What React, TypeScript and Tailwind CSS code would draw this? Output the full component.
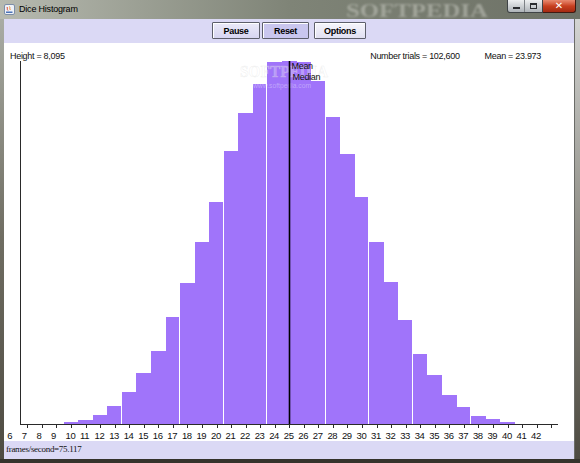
import React from 'react';

const X = (v: number) => 71 + (v - 10) * 14.55;

// top edge (screen y) of each bar, values 10..40
const tops: Record<number, number> = {
  10: 422, 11: 420, 12: 415, 13: 406, 14: 392, 15: 373, 16: 351, 17: 317, 18: 283,
  19: 242, 20: 202, 21: 151, 22: 113, 23: 84, 24: 62, 25: 60, 26: 62, 27: 81,
  28: 117, 29: 154, 30: 197, 31: 242, 32: 282, 33: 320, 34: 354, 35: 375,
  36: 395, 37: 407, 38: 416, 39: 419, 40: 422,
};
const gapAfter = new Set([13, 17, 20, 23, 27, 30, 33, 37]);
const BASE = 424;

const TitleBar = () => (
  <div className="h-[19px] flex items-start bg-gradient-to-r from-[#b7bab0] via-[#7f8477] to-[#6d7166]">
    <svg width="11" height="11" viewBox="0 0 11 11" className="ml-[4px] mt-[4px]">
      <rect x="0.5" y="0.5" width="10" height="10" rx="1.5" fill="#eef2f8" stroke="#7d8ea8" />
      <path d="M3 3 C4 4.5 2.5 5 4 6.5" stroke="#e0422a" strokeWidth="1" fill="none" />
      <path d="M5.5 2.5 C6.5 4 5 4.8 6.5 6" stroke="#f08a2a" strokeWidth="1" fill="none" />
      <path d="M2 7.5 H8.5 V9 H2 Z" fill="#4a72b8" />
    </svg>
    <span className="ml-[4px] mt-[4px] text-[9px] leading-[10px] tracking-[-0.2px] text-black">Dice Histogram</span>
    <div className="flex-1 flex justify-end pr-[16px] pt-[1px] blur-[1px]">
      <svg width="146" height="18" viewBox="0 0 146 18">
        <text x="1" y="16" fontFamily="Liberation Serif" fontWeight="bold" fontSize="19" textLength="142" lengthAdjust="spacingAndGlyphs" fill="#c4c6bd" fillOpacity="0.55">
          SOFTPEDIA
        </text>
      </svg>
    </div>
    <div className="flex mr-[4px]">
      <div className="w-[36px] h-[13px] flex rounded-bl-[3px] border border-t-0 border-[#3f4346] bg-gradient-to-b from-[#eef0f1] to-[#aeb3b8] overflow-hidden">
        <div className="w-1/2 flex items-end justify-center pb-[3px] border-r border-[#7d8185]">
          <div className="w-[7px] h-[2px] bg-[#2b2d30]" />
        </div>
        <div className="w-1/2 flex items-center justify-center">
          <div className="w-[7px] h-[6px] border border-[#2b2d30] border-t-2" />
        </div>
      </div>
      <div className="w-[33px] h-[13px] flex items-center justify-center rounded-br-[3px] border border-t-0 border-l-0 border-[#3f1a12] bg-gradient-to-b from-[#e88a70] via-[#c8401f] to-[#a52a12]">
        <span className="text-white text-[10px] leading-[10px] font-bold font-['DejaVu_Sans']">✕</span>
      </div>
    </div>
  </div>
);

const Btn = ({ label, bg, w }: { label: string; bg: string; w: string }) => (
  <div className={`${w} h-[17px] flex items-center justify-center border border-[#5d5f6b] rounded-[1px] shadow-[inset_1px_1px_0_#ffffff] ${bg}`}>
    <span className="text-[9px] leading-[10px] font-bold tracking-[-0.3px] text-black pt-[1px]">{label}</span>
  </div>
);

const Chart = () => {
  const labels: number[] = [];
  for (let v = 6; v <= 42; v++) labels.push(v);
  const ticks: number[] = [];
  for (let v = 7; v <= 43; v++) ticks.push(v);
  const bars = Object.keys(tops).map(Number);
  return (
    <svg width="570" height="380" viewBox="4 61 570 380" className="block">
      {bars.map((v) => {
        const left = Math.round(X(v) - 7.27);
        const right = Math.round(X(v + 1) - 7.27) - (gapAfter.has(v) ? 1 : 0);
        return <rect key={v} x={left} y={tops[v]} width={right - left} height={BASE - tops[v]} fill="#a074fa" />;
      })}
      <text x="240" y="76.5" fontFamily="Liberation Serif" fontWeight="bold" fontSize="17" textLength="88" lengthAdjust="spacingAndGlyphs" fill="#ffffff" fillOpacity="0.3" stroke="#d8d8d8" strokeOpacity="0.45" strokeWidth="0.5">
        SOFTPEDIA
      </text>
      <text x="253" y="87.5" fontFamily="Liberation Sans" fontSize="7" textLength="58" lengthAdjust="spacingAndGlyphs" fill="#ffffff" fillOpacity="0.35">
        www.softpedia.com
      </text>
      <line x1="20.5" y1="61" x2="20.5" y2="424.5" stroke="#2a2a2a" strokeWidth="1" />
      <line x1="20" y1="424.5" x2="558" y2="424.5" stroke="#2a2a2a" strokeWidth="1" />
      {ticks.map((v) => (
        <line key={v} x1={Math.round(X(v)) + 0.5} y1="424" x2={Math.round(X(v)) + 0.5} y2="428" stroke="#2a2a2a" strokeWidth="1" />
      ))}
      {labels.map((v) => (
        <text key={v} x={X(v) - 5.5} y="438.5" fontFamily="Liberation Sans" fontSize="9.5" letterSpacing="-0.4" fill="#111">
          {v}
        </text>
      ))}
      <line x1="289.5" y1="60" x2="289.5" y2="424" stroke="#000" strokeWidth="1.6" />
      <text x="291.5" y="68.5" fontFamily="Liberation Sans" fontSize="9" letterSpacing="-0.3" fill="#111">Mean</text>
      <text x="292.5" y="79.5" fontFamily="Liberation Sans" fontSize="9" letterSpacing="-0.3" fill="#111">Median</text>
    </svg>
  );
};

export default function App() {
  return (
    <div className="w-[580px] h-[463px] flex flex-col bg-[#3a3832] font-['Liberation_Sans',sans-serif] overflow-hidden">
      <TitleBar />
      <div className="flex">
        <div className="w-[4px] bg-gradient-to-b from-[#a9aca4] via-[#6f6d62] to-[#4e4b42]" />
        <div className="w-[570px] flex flex-col">
          <div className="h-[24px] bg-[#dbd9f5] flex items-start justify-center pt-[3px]">
            <Btn label="Pause" w="w-[48px]" bg="bg-gradient-to-b from-[#ebeaf8] to-[#d7d5f1]" />
            <Btn label="Reset" w="w-[47px] ml-[2px]" bg="bg-[#c9c6ee]" />
            <Btn label="Options" w="w-[52px] ml-[5px]" bg="bg-gradient-to-b from-[#f6f6fb] to-[#e1e0f2]" />
          </div>
          <div className="h-[398px] bg-white flex flex-col">
            <div className="h-[18px] flex pt-[8px] text-[9px] leading-[10px] tracking-[-0.3px] text-[#111]">
              <span className="ml-[6px]">Height = 8,095</span>
              <span className="ml-auto">Number trials = 102,600</span>
              <span className="ml-[25px] mr-[33px]">Mean = 23.973</span>
            </div>
            <Chart />
          </div>
          <div className="h-[18px] bg-[#dbd9f5] flex items-center pl-[2px]">
            <span className="font-['Liberation_Serif',serif] text-[9px] tracking-[-0.3px] text-[#111]">frames/second=75.117</span>
          </div>
        </div>
        <div className="w-[6px] flex">
          <div className="w-[1px] bg-[#6b6c68]" />
          <div className="flex-1 bg-gradient-to-b from-[#d3d4d2] via-[#8c8b83] to-[#4d4a41]" />
        </div>
      </div>
      <div className="h-[4px] bg-[#35332c]" />
    </div>
  );
}
